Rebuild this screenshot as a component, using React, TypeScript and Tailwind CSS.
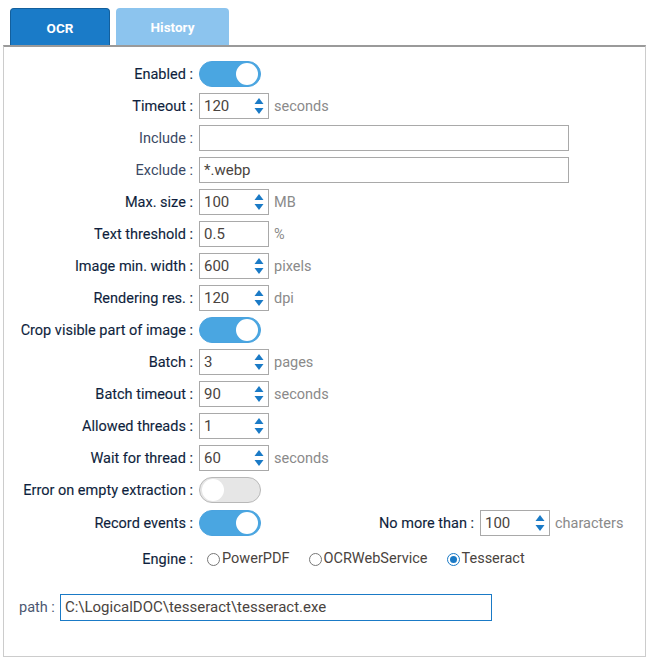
import type { ReactNode } from 'react';

type Row =
  | { kind: 'toggle'; label: string; on: boolean }
  | { kind: 'spin'; label: string; value: string; unit?: string }
  | { kind: 'text'; label: string; value: string; wide?: boolean; required?: boolean; unit?: string };

const rows: Row[] = [
  { kind: 'toggle', label: 'Enabled', on: true },
  { kind: 'spin', label: 'Timeout', value: '120', unit: 'seconds' },
  { kind: 'text', label: 'Include', value: '', wide: true },
  { kind: 'text', label: 'Exclude', value: '*.webp', wide: true },
  { kind: 'spin', label: 'Max. size', value: '100', unit: 'MB' },
  { kind: 'text', label: 'Text threshold', value: '0.5', required: true, unit: '%' },
  { kind: 'spin', label: 'Image min. width', value: '600', unit: 'pixels' },
  { kind: 'spin', label: 'Rendering res.', value: '120', unit: 'dpi' },
  { kind: 'toggle', label: 'Crop visible part of image', on: true },
  { kind: 'spin', label: 'Batch', value: '3', unit: 'pages' },
  { kind: 'spin', label: 'Batch timeout', value: '90', unit: 'seconds' },
  { kind: 'spin', label: 'Allowed threads', value: '1' },
  { kind: 'spin', label: 'Wait for thread', value: '60', unit: 'seconds' },
  { kind: 'toggle', label: 'Error on empty extraction', on: false },
];

// required fields get the darker, slightly heavier label
const labelTone = (required: boolean) =>
  required ? 'text-[#0f1f3d] [-webkit-text-stroke:0.12px_#0f1f3d]' : 'text-[#3a4864]';

const Label = ({ text, required = true }: { text: string; required?: boolean }) => (
  <div className={`w-[195px] shrink-0 pr-[6px] pt-[2px] text-right text-[14.5px] ${labelTone(required)}`}>
    {text} :
  </div>
);

const Toggle = ({ on }: { on: boolean }) => (
  <div
    className={`flex h-[26px] w-[62px] items-center rounded-full border px-[2px] ${
      on ? 'justify-end border-[#4aa3df] bg-[#4aa6e1]' : 'justify-start border-[#b8b8b8] bg-[#e6e6e6]'
    }`}
  >
    <div className="h-[22px] w-[22px] rounded-full bg-white" />
  </div>
);

const Arrows = () => (
  <svg width="10" height="20" viewBox="0 0 10 20" className="shrink-0">
    <path d="M5 2 L9.5 8 H0.5 Z" fill="#1a7ac6" />
    <path d="M5 18 L9.5 12 H0.5 Z" fill="#1a7ac6" />
  </svg>
);

const Spinner = ({ value }: { value: string }) => (
  <div className="flex h-[26px] w-[70px] items-center border border-[#a9a9a9] bg-white pl-[4px] pr-[4px]">
    <span className="flex-1 text-[15px] text-[#4a4440]">{value}</span>
    <Arrows />
  </div>
);

const Unit = ({ children }: { children: ReactNode }) => (
  <span className="ml-[5px] pt-[1px] text-[14.5px] text-[#8a8a8a]">{children}</span>
);

const Radio = ({ label, checked }: { label: string; checked?: boolean }) => (
  <label className="flex items-center gap-[2px] text-[14.5px] text-[#4a4440]">
    <span
      className={`flex h-[13px] w-[13px] items-center justify-center rounded-full border ${
        checked ? 'border-[#1a7ac6]' : 'border-[#777]'
      }`}
    >
      {checked && <span className="h-[7px] w-[7px] rounded-full bg-[#1a7ac6]" />}
    </span>
    {label}
  </label>
);

export default function App() {
  return (
    <div className="h-[663px] w-[648px] bg-white font-['Roboto',sans-serif]">
      <div className="flex items-end gap-[6px] pl-[10px] pt-[8px]">
        <div className="flex h-[37px] w-[100px] items-center justify-center rounded-t-[4px] border border-b-0 border-[#135f9c] bg-[#1a7bc8] pt-[2px] text-[13.5px] font-bold text-white">
          OCR
        </div>
        <div className="flex h-[37px] w-[113px] items-center justify-center rounded-t-[4px] bg-[#8cc4ee] pt-[2px] text-[13.5px] font-bold text-white">
          History
        </div>
      </div>

      <div className="ml-[3px] h-[612px] w-[643px] border border-t-2 border-[#cccccc] border-t-[#9a9a9a] pt-[11px]">
        {rows.map((row) => (
          <div key={row.label} className="flex h-[32px] items-center">
            <Label text={row.label} required={row.kind === 'text' ? !!row.required : true} />
            {row.kind === 'toggle' && <Toggle on={row.on} />}
            {row.kind === 'spin' && (
              <>
                <Spinner value={row.value} />
                {row.unit && <Unit>{row.unit}</Unit>}
              </>
            )}
            {row.kind === 'text' && (
              <>
                <div
                  className={`flex h-[26px] items-center border border-[#a9a9a9] bg-white pl-[4px] text-[15px] text-[#4a4440] ${
                    row.wide ? 'w-[370px]' : 'w-[70px]'
                  }`}
                >
                  {row.value}
                </div>
                {row.unit && <Unit>{row.unit}</Unit>}
              </>
            )}
          </div>
        ))}

        <div className="mt-[1px] flex h-[32px] items-center">
          <Label text="Record events" />
          <Toggle on />
          <div className={`w-[219px] shrink-0 pr-[6px] pt-[2px] text-right text-[14.5px] ${labelTone(true)}`}>
            No more than :
          </div>
          <Spinner value="100" />
          <Unit>characters</Unit>
        </div>

        <div className="mt-[4px] flex h-[32px] items-center">
          <Label text="Engine" />
          <div className="ml-[8px] flex items-center gap-[19px]">
            <Radio label="PowerPDF" />
            <Radio label="OCRWebService" />
            <Radio label="Tesseract" checked />
          </div>
        </div>

        <div className="mt-[16px] flex h-[32px] items-center pl-[15px]">
          <span className="pr-[5px] pt-[1px] text-[14.5px] text-[#4b5872]">path :</span>
          <div className="flex h-[27px] w-[432px] items-center border border-[#1a7ac6] bg-white pl-[4px] text-[15px] text-[#4a4440]">
            C:\LogicalDOC\tesseract\tesseract.exe
          </div>
        </div>
      </div>
    </div>
  );
}
